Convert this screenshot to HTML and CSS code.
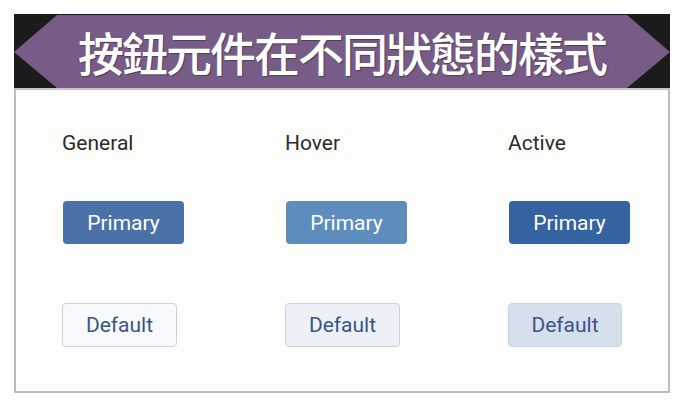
FILE: index.html
```html
<!DOCTYPE html>
<html lang="zh-Hant">
<head>
    <meta charset="UTF-8">
    <meta name="viewport" content="width=device-width, initial-scale=1.0">
    <title>按鈕元件在不同狀態的樣式</title>
    <link rel="stylesheet" href="styles.css">
</head>
<body>
    <div class="frame">
        <div class="banner">
            <div class="banner-shape">
                <h1>按鈕元件在不同狀態的樣式</h1>
            </div>
        </div>

        <div class="card">
            <div class="state">
                <div class="label">General</div>
                <button class="btn btn-primary">Primary</button>
                <button class="btn btn-default">Default</button>
            </div>
            <div class="state">
                <div class="label">Hover</div>
                <button class="btn btn-primary is-hover">Primary</button>
                <button class="btn btn-default is-hover">Default</button>
            </div>
            <div class="state">
                <div class="label">Active</div>
                <button class="btn btn-primary is-active">Primary</button>
                <button class="btn btn-default is-active">Default</button>
            </div>
        </div>
    </div>
</body>
</html>
```

FILE: styles.css
```css
body {
    margin: 0;
    background: #ffffff;
    font-family: Roboto, "Noto Sans CJK TC", sans-serif;
}
.frame {
    width: 656px;
    margin: 14px 0 0 14px;
}
/* Title banner */
.banner {
    background: #1b1b1b;
    height: 74px;
}
.banner-shape {
    height: 100%;
    background: #775c88;
    clip-path: polygon(43px 1px, 613px 1px, 656px 38px, 613px 74px, 43px 74px, 0 38px);
    display: flex;
    align-items: center;
    justify-content: center;
}
.banner h1 {
    margin: 0;
    color: #ffffff;
    font-family: "Noto Sans CJK TC", sans-serif;
    font-weight: 500;
    font-size: 46px;
    line-height: 1;
    letter-spacing: -2px;
    text-shadow: 1px 1px 1px rgba(0, 0, 0, 0.35);
}
/* Card with the three states */
.card {
    background: #fdfdfc;
    border: 2px solid #bdbdbd;
    border-top-color: #c4c4c4;
    padding: 41px 0 0 46px;
    box-sizing: border-box;
    height: 305px;
    display: grid;
    grid-template-columns: 223px 223px 1fr;
}
.state {
    display: flex;
    flex-direction: column;
    align-items: flex-start;
}
.label {
    font-size: 21px;
    line-height: 24px;
    color: #2b2b2b;
}
.btn {
    font-family: Roboto, sans-serif;
    font-size: 21px;
    border-radius: 4px;
    cursor: pointer;
    padding: 0;
}
.btn-primary {
    width: 121px;
    height: 43px;
    margin-top: 46px;
    margin-left: 1px;
    border: none;
    color: #ffffff;
    background: #4a72a9;
}
.btn-primary.is-hover {
    background: #5c8dbd;
}
.btn-primary.is-active {
    background: #3562a0;
}
.btn-default {
    width: 115px;
    height: 44px;
    margin-top: 59px;
    border: 1px solid #c6d3e7;
    color: #3b5585;
    background: #f7f9fc;
}
.btn-default.is-hover {
    background: #edf1f7;
}
.btn-default.is-active {
    width: 114px;
    background: #d5e0ec;
    border-color: #cbd7e6;
}
```
